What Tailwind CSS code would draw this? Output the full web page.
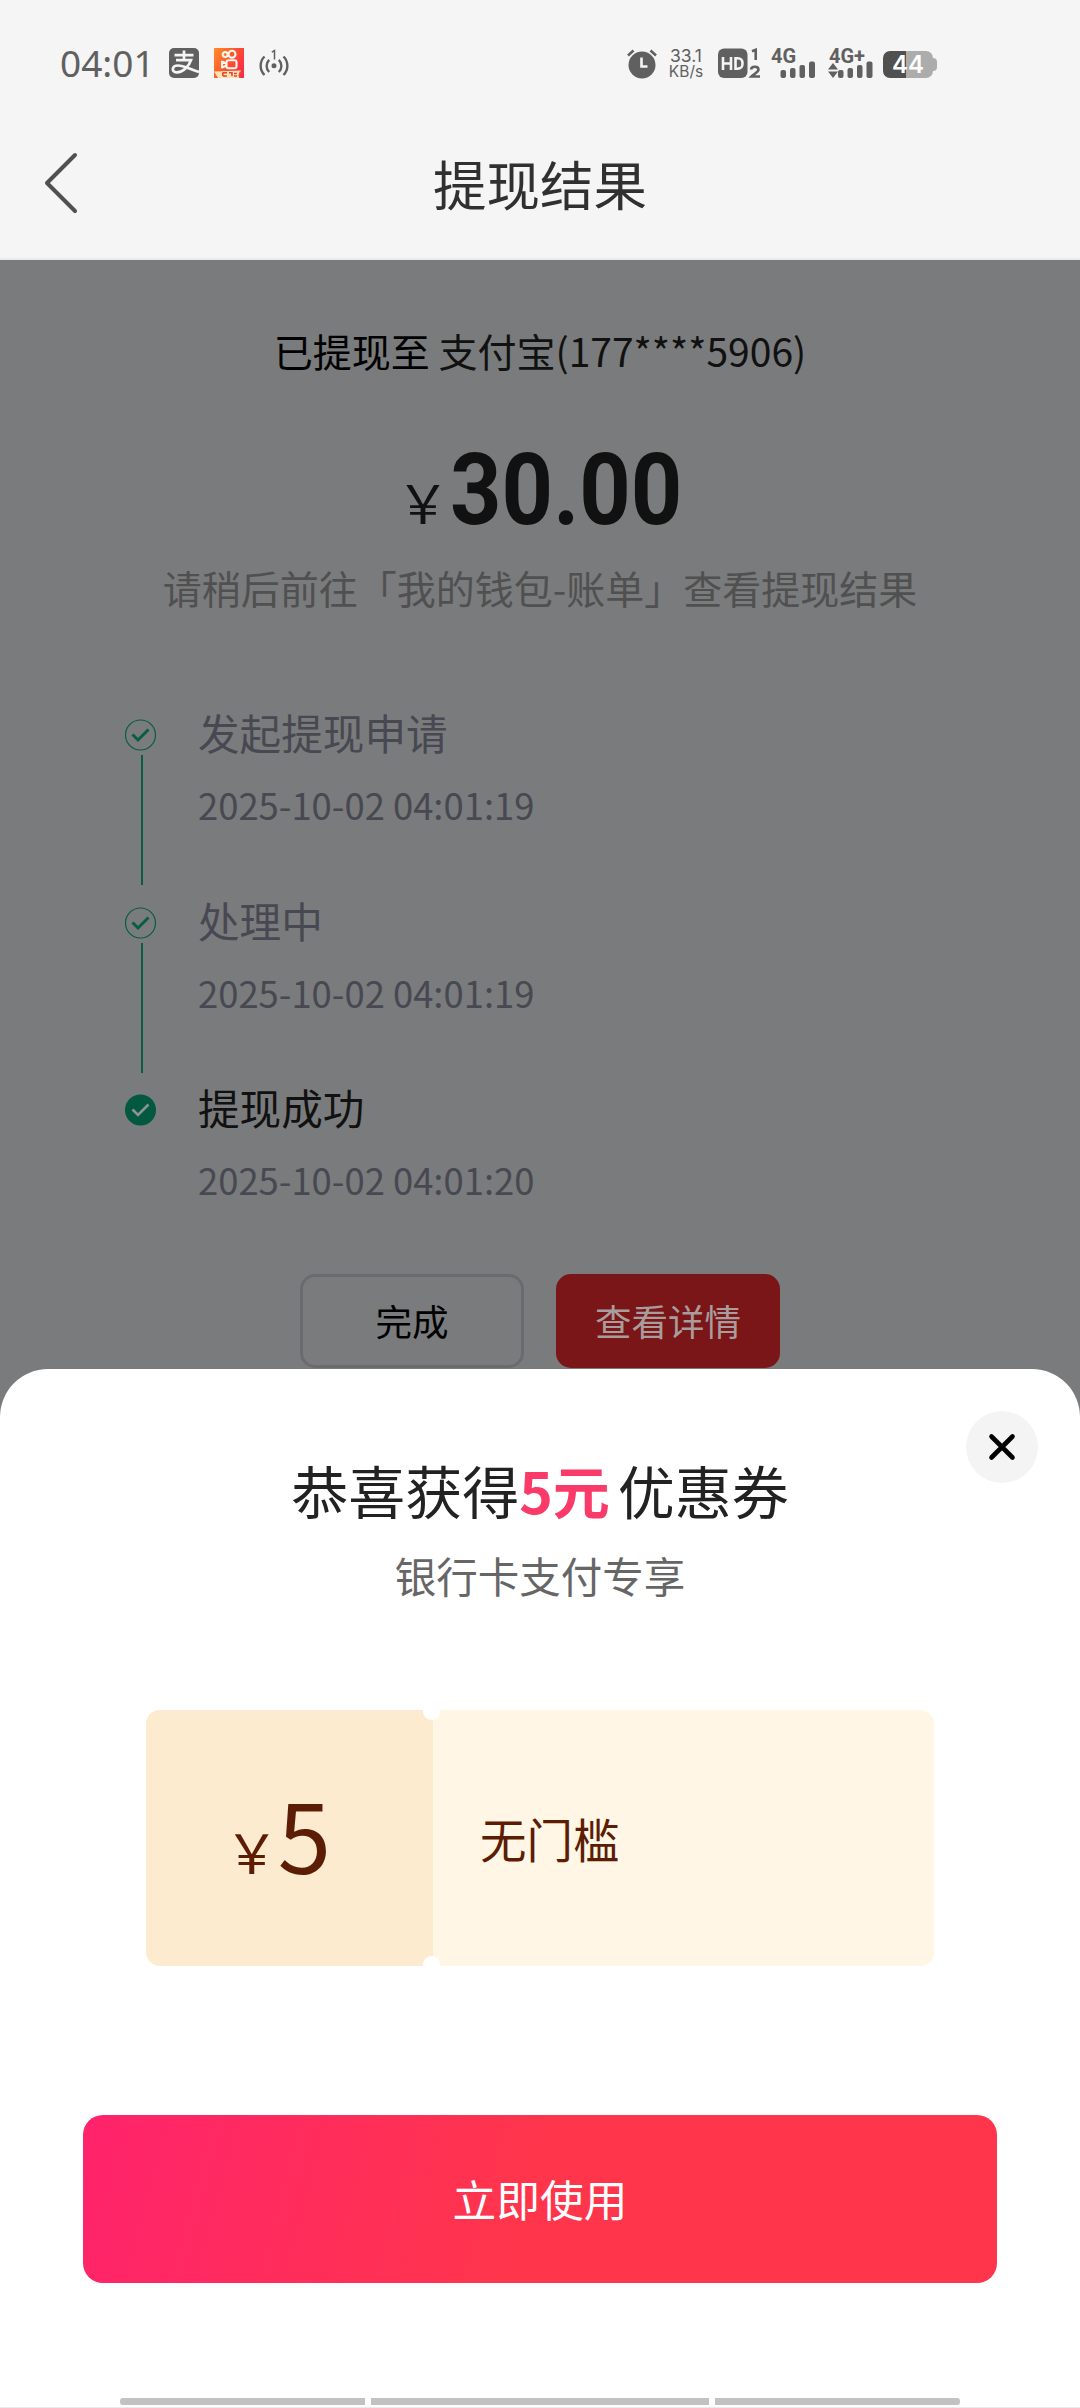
<!DOCTYPE html>
<html lang="zh-CN">
<head>
<meta charset="utf-8">
<title>提现结果</title>
<script src="https://cdn.jsdelivr.net/npm/@tailwindcss/browser@4"></script>
</head>
<body class="w-[1080px] h-[2408px] overflow-hidden bg-[#7a7b7c] font-['Noto_Sans_CJK_SC',sans-serif] whitespace-nowrap flex flex-col">

<header class="h-[260px] shrink-0 bg-[#f5f5f5] border-b-2 border-[#ebebeb] flex flex-col">
  <!-- status bar -->
  <div class="h-[126px] flex items-start pt-[48px] text-[#606060]">
    <div class="ml-[60px] w-[109px] h-[30px] flex items-center font-['Noto_Sans',sans-serif] text-[37px] leading-[30px]">04:01</div>
    <svg class="size-[30px]" viewBox="0 0 30 30">
      <rect width="30" height="30" rx="5" fill="#606060"/>
      <path d="M5.500 7.200H24.500M15 2.500V12M7 12.200H22C20 18.500 13.500 24.600 7.500 24.300C2 24 2.800 17.500 9 17.500C15 17.500 21 21.500 30 24" fill="none" stroke="#f5f5f5" stroke-width="2.700"/>
    </svg>
    <svg class="ml-[15px] size-[30px]" viewBox="0 0 30 30">
      <defs><linearGradient id="k" x1="0" y1="0" x2="1" y2=".6"><stop offset="0" stop-color="#ff8f2a"/><stop offset=".5" stop-color="#fd5a2c"/><stop offset="1" stop-color="#f92f45"/></linearGradient></defs>
      <rect width="30" height="30" fill="url(#k)"/>
      <g fill="none" stroke="#fff6ea" stroke-width="2.100" stroke-linejoin="round">
        <circle cx="11.200" cy="6.600" r="2.500"/><circle cx="18" cy="6.200" r="3.500"/>
        <rect x="12.500" y="12.300" width="10" height="8" rx="2"/><path d="M12.500 15.500L8 13.500V19.500L12.500 17.500"/>
      </g>
      <path d="M0 23.500L27 22.500L25 30H4Z" fill="#ffe3b8"/>
      <path d="M8.500 24.800H13M9 28H13M8.800 24.800V28M15 24.800H18V28.300M20 25.500H23M20 28H23M26.500 23.500L25 28.500" fill="none" stroke="#e8452a" stroke-width="1.600"/>
    </svg>
    <svg class="ml-[14px] w-[32px] h-[30px]" viewBox="0 0 32 30" fill="none" stroke="#606060" stroke-width="2.400">
      <path d="M6.500 8.500A13 13 0 0 0 6.500 27M11.200 11.800A8.500 8.500 0 0 0 11.200 24M25.500 8.500A13 13 0 0 1 25.500 27M20.800 11.800A8.500 8.500 0 0 1 20.800 24"/>
      <circle cx="16" cy="17.700" r="2.500" fill="#606060" stroke="none"/>
      <path d="M13.800 4.200L16.500 2.500V11.500" stroke-width="1.500"/>
    </svg>

    <svg class="ml-[336px] w-[32px] h-[31px]" viewBox="0 0 32 31">
      <circle cx="16" cy="17" r="13.500" fill="#606060"/>
      <path d="M2 7.500L7.500 2.500M24.500 2.500L30 7.500" stroke="#606060" stroke-width="2.600"/>
      <path d="M15.500 9.500V18.500H21.500" fill="none" stroke="#f5f5f5" stroke-width="2.600"/>
    </svg>
    <div class="ml-[9px] w-[38px] h-[31px] flex flex-col items-center font-['Inter',sans-serif] leading-[16px]">
      <span class="text-[17.500px]">33.1</span><span class="text-[15.500px]">KB/s</span>
    </div>
    <svg class="ml-[12px] w-[46px] h-[31px]" viewBox="0 0 46 31" fill="#606060">
      <rect x="1" y=".5" width="29.500" height="29.500" rx="6"/>
      <path d="M6 9V22M14 9V22M6 15.500H14M18.500 10.300H20.500C24.600 10.300 25.500 12 25.500 15.500C25.500 19 24.600 20.700 20.500 20.700H18.500Z" fill="none" stroke="#f5f5f5" stroke-width="2.600"/>
      <path d="M35 3.200L38.700 1.800V12" fill="none" stroke="#606060" stroke-width="2.600"/>
      <path d="M34 21.500C34.500 17.500 41.500 18 41.500 21.500C41.500 24 37.500 25.500 34.500 28.500H43" fill="none" stroke="#606060" stroke-width="2.600"/>
    </svg>
    <div class="ml-[8px] relative w-[48px] h-[31px]">
      <span class="absolute -top-px left-0 font-['Roboto',sans-serif] font-bold text-[20px] leading-[18px]">4G</span>
      <svg class="absolute left-0 top-0 w-[48px] h-[31px]" viewBox="0 0 48 31" fill="#606060"><rect x="9.500" y="22" width="5.500" height="8" rx="2"/><rect x="19" y="20" width="5.500" height="10" rx="2"/><rect x="28.500" y="17" width="5.500" height="13" rx="2"/><rect x="38" y="13.500" width="6" height="16.500" rx="2"/></svg>
    </div>
    <div class="ml-[9px] relative w-[48px] h-[31px]">
      <span class="absolute -top-px left-[1px] font-['Roboto',sans-serif] font-bold text-[20px] leading-[18px]">4G+</span>
      <svg class="absolute left-0 top-0 w-[48px] h-[31px]" viewBox="0 0 48 31" fill="#606060"><path d="M0 21.500L5 15L10 21.500ZM0 23.500H10L5 30Z"/><rect x="10" y="22" width="5.500" height="8" rx="2"/><rect x="19.500" y="20" width="5.500" height="10" rx="2"/><rect x="29" y="17" width="5.500" height="13" rx="2"/><rect x="38.500" y="13.500" width="6" height="16.500" rx="2"/></svg>
    </div>
    <div class="ml-[7px] mt-[3px] relative flex items-center">
      <div class="w-[50px] h-[27px] rounded-[7px] bg-linear-to-r from-[#505050] from-[46%] to-[#acacac] to-[46%] flex items-center justify-center font-['Inter',sans-serif] font-semibold text-[24px] leading-none text-white">44</div>
      <div class="w-[4px] h-[13px] rounded-r-[4px] bg-[#acacac]"></div>
    </div>
  </div>
  <!-- title bar -->
  <div class="h-[114px] grid grid-cols-[1fr_auto_1fr] items-center text-[#303030]">
    <svg class="ml-[42px] w-[38px] h-[64px]" viewBox="0 0 38 64" fill="none" stroke="#505050" stroke-width="4" stroke-linecap="round"><path d="M33 4L5 32L33 60" stroke-linejoin="round"/></svg>
    <h1 class="text-[53.500px] leading-none">提现结果</h1>
    <span></span>
  </div>
</header>

<main class="h-[1109px] shrink-0 pt-[62px] flex flex-col">
  <p class="h-[56px] flex items-center justify-center text-[39px] leading-none text-[#111]"><span class="text-black">已提现至</span><span>&nbsp;支付宝(177****5906)</span></p>
  <div class="mt-[61px] h-[101px] pl-[3px] flex items-baseline justify-center gap-[10px] leading-none text-[#111]">
    <span class="text-[53px] leading-none w-[33px] flex justify-center">￥</span>
    <span class="w-[227px] font-['Roboto',sans-serif] font-bold text-[101px] leading-none origin-left scale-x-[.89]">30.00</span>
  </div>
  <p class="mt-[19px] h-[56px] flex items-center justify-center text-[39px] leading-none text-[#505050]">请稍后前往「我的钱包-账单」查看提现结果</p>

  <ol class="mt-[90px] h-[569px] ml-[125px] flex flex-col text-[#484852]">
    <li class="h-[187.500px] flex gap-[42px]">
      <div class="w-[31px] pt-[14px] flex flex-col items-center gap-[4px]">
        <svg class="w-[31px] h-[32px] shrink-0" viewBox="0 0 31 32" fill="none" stroke="#075e42"><circle cx="15.500" cy="16" r="15" stroke-width="1.200"/><path d="M7.500 15.500L13 21L23.500 10.500" stroke-width="3"/></svg>
        <div class="ml-[3px] w-[2px] h-[130px] bg-[#075e42]"></div>
      </div>
      <div class="flex flex-col gap-[15.500px]">
        <span class="h-[56px] flex items-center text-[41.600px] leading-none">发起提现申请</span>
        <span class="h-[56px] flex items-center text-[36.400px] leading-none">2025-10-02 04:01:19</span>
      </div>
    </li>
    <li class="h-[187.500px] flex gap-[42px]">
      <div class="w-[31px] pt-[14px] flex flex-col items-center gap-[4px]">
        <svg class="w-[31px] h-[32px] shrink-0" viewBox="0 0 31 32" fill="none" stroke="#075e42"><circle cx="15.500" cy="16" r="15" stroke-width="1.200"/><path d="M7.500 15.500L13 21L23.500 10.500" stroke-width="3"/></svg>
        <div class="ml-[3px] w-[2px] h-[130px] bg-[#075e42]"></div>
      </div>
      <div class="flex flex-col gap-[15.500px]">
        <span class="h-[56px] flex items-center text-[41.600px] leading-none">处理中</span>
        <span class="h-[56px] flex items-center text-[36.400px] leading-none">2025-10-02 04:01:19</span>
      </div>
    </li>
    <li class="flex gap-[42px]">
      <div class="w-[31px] pt-[14px]">
        <svg class="w-[31px] h-[32px]" viewBox="0 0 31 32" fill="none"><circle cx="15.500" cy="16" r="15.500" fill="#02593f"/><path d="M7.500 15.500L13 21L23.500 10.500" stroke="#8c9491" stroke-width="2.600"/></svg>
      </div>
      <div class="flex flex-col gap-[15.500px]">
        <span class="h-[56px] flex items-center text-[41.600px] leading-none text-[#111]">提现成功</span>
        <span class="h-[56px] flex items-center text-[36.400px] leading-none">2025-10-02 04:01:20</span>
      </div>
    </li>
  </ol>

  <div class="h-[94px] flex justify-center gap-[32px] text-[36.500px] leading-none">
    <button class="w-[224px] rounded-[15px] border-[3px] border-[#6b6b6f] text-black">完成</button>
    <button class="w-[224px] rounded-[15px] bg-[#7a1518] text-[#a99c9c]">查看详情</button>
  </div>
</main>

<section class="relative grow bg-white rounded-t-[48px] flex flex-col items-center pt-[88px]">
  <button aria-label="关闭" class="absolute right-[42px] top-[42px] size-[72px] rounded-full bg-[#f4f4f4] flex items-center justify-center">
    <svg class="size-[30px]" viewBox="0 0 30 30" fill="none" stroke="#000" stroke-width="4.600" stroke-linecap="round"><path d="M4.500 4.500L25.500 25.500M25.500 4.500L4.500 25.500"/></svg>
  </button>
  <h2 class="h-[64px] flex items-center text-[57px] leading-none text-[#222]">恭喜获得<span class="font-bold text-[#fa3a68] mr-[8px]">5元</span>优惠券</h2>
  <p class="mt-[28px] h-[54px] flex items-center text-[41.500px] leading-none text-[#666]">银行卡支付专享</p>

  <div class="relative mt-[107px] w-[788px] h-[256px] rounded-[14px] overflow-hidden flex text-[#5c1d04]">
    <div class="w-[287px] bg-[#fdebd0] flex items-baseline justify-center pt-[75px] pr-[14px] gap-[8px]">
      <span class="text-[54px] leading-none w-[36px] flex justify-center">￥</span>
      <span class="text-[96px] leading-none">5</span>
    </div>
    <div class="grow bg-[#fff6e6] flex items-center pl-[47px] text-[46.500px] leading-none">无门槛</div>
    <i class="absolute left-[277px] top-[-7px] size-[17px] rounded-full bg-white"></i>
    <i class="absolute left-[277px] bottom-[-7px] size-[17px] rounded-full bg-white"></i>
  </div>

  <button class="mt-[149px] w-[914px] h-[168px] rounded-[20px] bg-[linear-gradient(105deg,#ff236c_0%,#ff354c_48%)] text-white text-[43.700px] leading-none">立即使用</button>

  <nav class="mt-[115px] h-[7px] flex gap-[6px]">
    <span class="w-[245px] rounded-l-[3px] bg-[#c2c2c2]"></span>
    <span class="w-[338px] bg-[#c2c2c2]"></span>
    <span class="w-[245px] rounded-r-[3px] bg-[#c2c2c2]"></span>
  </nav>
  <div class="mt-auto w-full h-px bg-[#ececec]"></div>
</section>
</body>
</html>
